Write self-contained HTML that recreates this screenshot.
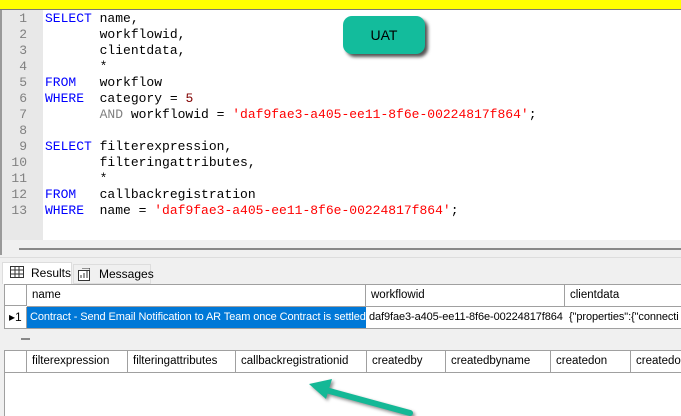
<!DOCTYPE html>
<html><head><style>
*{margin:0;padding:0;box-sizing:border-box}
body{width:681px;height:416px;overflow:hidden;background:#fff;position:relative;font-family:"Liberation Sans",sans-serif}
.abs{position:absolute}
.code{font-family:"Liberation Mono",monospace;font-size:13px;line-height:16px;white-space:pre;color:#000}
.k{color:#0000ff}.s{color:#ff0000}.g{color:#808080}.n{color:#800000}
.ln{font-family:"Liberation Mono",monospace;font-size:13px;line-height:16px;color:#808080;text-align:right;white-space:pre}
.hd{position:absolute;height:22px;border-right:1px solid #a0a0a0;font-size:11.5px;line-height:22px;padding-left:5px;color:#000;white-space:nowrap;overflow:hidden}
.d{font-size:11px;letter-spacing:-0.1px}
</style></head><body>
<div class="abs" style="left:0;top:0;width:681px;height:9px;background:#ffff00"></div>
<div class="abs" style="left:0;top:9px;width:681px;height:1px;background:#777"></div>
<div class="abs" style="left:0;top:10px;width:2px;height:245px;background:#999"></div>
<div class="abs" style="left:2px;top:10px;width:41px;height:230px;background:#e8e8e8"></div>
<div class="abs ln" style="left:2px;top:11px;width:25px">1
2
3
4
5
6
7
8
9
10
11
12
13</div>
<div class="abs code" style="left:45px;top:11px"><span class="k">SELECT</span> name,
       workflowid,
       clientdata,
       *
<span class="k">FROM</span>   workflow
<span class="k">WHERE</span>  category = <span class="n">5</span>
       <span class="g">AND</span> workflowid = <span class="s">'daf9fae3-a405-ee11-8f6e-00224817f864'</span>;

<span class="k">SELECT</span> filterexpression,
       filteringattributes,
       *
<span class="k">FROM</span>   callbackregistration
<span class="k">WHERE</span>  name = <span class="s">'daf9fae3-a405-ee11-8f6e-00224817f864'</span>;</div>
<div class="abs" style="left:343px;top:16px;width:82px;height:38px;border-radius:9px;background:#13bc9c;box-shadow:3px 3px 3px #555;font-size:14px;line-height:38px;text-align:center;color:#000">UAT</div>
<div class="abs" style="left:2px;top:240px;width:679px;height:15px;background:#f0f0f0"></div>
<div class="abs" style="left:19px;top:248px;width:662px;height:2px;background:#888"></div>
<div class="abs" style="left:0;top:255px;width:681px;height:161px;background:#f0f0f0"></div>
<div class="abs" style="left:0;top:257px;width:681px;height:1px;background:#ddd"></div>
<div class="abs" style="left:2px;top:262px;width:70px;height:22px;background:#fff;border:1px solid #ddd;border-bottom:none;font-size:12px;line-height:20px;padding-left:28px">Results</div>
<svg class="abs" style="left:10px;top:266px" width="14" height="12"><rect x="0.5" y="0.5" width="13" height="11" fill="#fff" stroke="#333"/><path d="M0 4h14M0 8h14M5 0v12M9 0v12" stroke="#333"/></svg>
<div class="abs" style="left:73px;top:264px;width:78px;height:20px;background:#f0f0f0;border:1px solid #ddd;font-size:12px;line-height:18px;padding-left:25px">Messages</div>
<svg class="abs" style="left:78px;top:268px" width="12" height="13"><rect x="0.5" y="2.5" width="11" height="10" fill="#fff" stroke="#333"/><path d="M3 10v-3M6 10v-5M9 10v-7M4 0h8v10" stroke="#333" fill="none"/></svg>
<div class="abs" style="left:4px;top:284px;width:677px;height:45px;background:#fff;border:1px solid #a0a0a0;border-right:none"></div>
<div class="hd" style="left:4px;top:284px;width:23px;border-bottom:1px solid #a0a0a0"></div>
<div class="hd" style="left:27px;top:284px;width:339px">name</div>
<div class="hd" style="left:366px;top:284px;width:199px">workflowid</div>
<div class="hd" style="left:565px;top:284px;width:116px;border-right:none">clientdata</div>
<div class="abs" style="left:27px;top:306px;width:654px;height:1px;background:#a0a0a0"></div>
<div class="abs" style="left:4px;top:307px;width:23px;height:21px;border-right:1px solid #a0a0a0;font-size:12px;line-height:21px;padding-left:5px">&#9656;1</div>
<div class="abs d" style="left:27px;top:307px;width:339px;height:21px;background:#0078d7;color:#fff;line-height:21px;padding-left:3px;white-space:nowrap;overflow:hidden">Contract - Send Email Notification to AR Team once Contract is settled</div>
<div class="abs d" style="left:369px;top:307px;width:194px;line-height:21px;white-space:nowrap;overflow:hidden">daf9fae3-a405-ee11-8f6e-00224817f864</div>
<div class="abs d" style="left:569px;top:307px;line-height:21px;white-space:nowrap">{"properties":{"connecti</div>
<div class="abs" style="left:21px;top:338px;width:9px;height:2px;background:#888"></div>
<div class="abs" style="left:4px;top:350px;width:677px;height:66px;background:#fff;border-left:1px solid #a0a0a0;border-top:1px solid #a0a0a0"></div>
<div class="abs" style="left:4px;top:372px;width:677px;height:1px;background:#a0a0a0"></div>
<div class="hd" style="left:4px;top:350px;width:23px"></div>
<div class="hd" style="left:27px;top:350px;width:101px">filterexpression</div>
<div class="hd" style="left:128px;top:350px;width:108px">filteringattributes</div>
<div class="hd" style="left:236px;top:350px;width:131px">callbackregistrationid</div>
<div class="hd" style="left:367px;top:350px;width:79px">createdby</div>
<div class="hd" style="left:446px;top:350px;width:105px">createdbyname</div>
<div class="hd" style="left:551px;top:350px;width:80px">createdon</div>
<div class="hd" style="left:631px;top:350px;width:50px;border-right:none">createdon</div>
<svg class="abs" style="left:300px;top:375px" width="120" height="41">
<g filter="drop-shadow(2px 2px 1.5px rgba(0,0,0,.45))">
<path d="M110 38 L22 14" stroke="#14b896" stroke-width="6" stroke-linecap="round"/>
<path d="M9 9 L32 4 L26 24 Z" fill="#14b896"/>
</g></svg>
</body></html>
